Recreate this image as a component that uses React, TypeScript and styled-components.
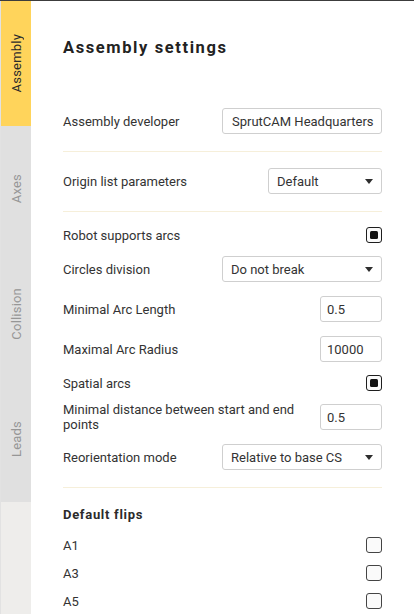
import styled, { createGlobalStyle } from 'styled-components';

const GlobalStyle = createGlobalStyle`
  html, body {
    margin: 0;
    padding: 0;
    background: #ffffff;
  }
  body {
    font-family: Roboto, "Liberation Sans", Arial, sans-serif;
    color: #333;
  }
  * {
    box-sizing: border-box;
  }
`;

const Frame = styled.div`
  display: flex;
  height: 614px;
  border-top: 1px solid #3c3c3c;
  overflow: hidden;
`;

const Sidebar = styled.nav`
  display: flex;
  flex-direction: column;
  flex: 0 0 31px;
  background: #eeedeb;
  border-left: 1px solid #e2e2e2;
`;

const Tab = styled.div<{ $active?: boolean }>`
  display: flex;
  align-items: center;
  justify-content: center;
  height: 125.25px;
  background: ${(p) => (p.$active ? '#ffd45b' : '#e0e0e0')};
  color: ${(p) => (p.$active ? '#2b2b2b' : '#969696')};
  font-size: 13px;
  letter-spacing: 0.2px;
`;

const TabLabel = styled.span`
  writing-mode: vertical-rl;
  transform: rotate(180deg);
`;

const Main = styled.main`
  flex: 1;
  background: #fff;
  padding: 37px 32px 0 32px;
`;

const Title = styled.h1`
  margin: 0 0 34px;
  font-size: 16.5px;
  line-height: 20px;
  font-weight: 700;
  letter-spacing: 1.6px;
  color: #222;
`;

const Section = styled.section<{ $last?: boolean }>`
  display: flex;
  flex-direction: column;
  gap: 14px;
  padding: ${(p) => (p.$last ? '19px 0 17px' : '16px 0 17px')};
  border-bottom: ${(p) => (p.$last ? 'none' : '1px solid #f6efda')};
`;

const Row = styled.div<{ $tight?: boolean }>`
  display: flex;
  align-items: center;
  justify-content: space-between;
  gap: 12px;
  ${(p) => (p.$tight ? 'height: 14px;' : 'min-height: 26px;')}
`;

const Label = styled.span<{ $wrap?: boolean }>`
  font-size: 13px;
  line-height: 15px;
  color: #333;
  ${(p) => (p.$wrap ? 'margin: -2px 0; max-width: 250px;' : 'white-space: nowrap;')}
`;

const Heading = styled.h2`
  margin: 0 0 2px;
  font-size: 13px;
  line-height: 15px;
  font-weight: 700;
  letter-spacing: 0.7px;
  color: #2b2b2b;
`;

const TextBox = styled.div<{ $width: number; $pad?: number }>`
  display: flex;
  align-items: center;
  flex: 0 0 auto;
  width: ${(p) => p.$width}px;
  height: 26px;
  padding: 0 ${(p) => p.$pad ?? 6}px;
  border: 1px solid #cfcfcf;
  border-radius: 3px;
  background: #fff;
  font-size: 13px;
  color: #333;
  white-space: nowrap;
  overflow: hidden;
`;

const SelectBox = styled(TextBox)`
  justify-content: space-between;
  padding: 0 8px 0 8px;
`;

const Caret = styled.span`
  width: 0;
  height: 0;
  border-left: 4.5px solid transparent;
  border-right: 4.5px solid transparent;
  border-top: 5px solid #2e2e2e;
`;

const Check = styled.span<{ $checked?: boolean }>`
  display: flex;
  align-items: center;
  justify-content: center;
  flex: 0 0 16px;
  width: 16px;
  height: 16px;
  margin: -1px 0;
  border: 1.5px solid ${(p) => (p.$checked ? '#1e1e1e' : '#444')};
  border-radius: 3px;
  background: #fafafa;

  &::after {
    content: '';
    display: ${(p) => (p.$checked ? 'block' : 'none')};
    width: 8px;
    height: 8px;
    border-radius: 1.5px;
    background: #111;
  }
`;

function Select({ value, width }: { value: string; width: number }) {
  return (
    <SelectBox $width={width}>
      <span>{value}</span>
      <Caret />
    </SelectBox>
  );
}

const tabs = ['Assembly', 'Axes', 'Collision', 'Leads'];

export default function App() {
  return (
    <>
      <GlobalStyle />
      <Frame>
        <Sidebar>
          {tabs.map((t, i) => (
            <Tab key={t} $active={i === 0}>
              <TabLabel>{t}</TabLabel>
            </Tab>
          ))}
        </Sidebar>
        <Main>
          <Title>Assembly settings</Title>

          <Section>
            <Row>
              <Label>Assembly developer</Label>
              <TextBox $width={160} $pad={9}>SprutCAM Headquarters</TextBox>
            </Row>
          </Section>

          <Section>
            <Row>
              <Label>Origin list parameters</Label>
              <Select value="Default" width={114} />
            </Row>
          </Section>

          <Section>
            <Row $tight>
              <Label>Robot supports arcs</Label>
              <Check $checked />
            </Row>
            <Row>
              <Label>Circles division</Label>
              <Select value="Do not break" width={160} />
            </Row>
            <Row>
              <Label>Minimal Arc Length</Label>
              <TextBox $width={62}>0.5</TextBox>
            </Row>
            <Row>
              <Label>Maximal Arc Radius</Label>
              <TextBox $width={62}>10000</TextBox>
            </Row>
            <Row $tight>
              <Label>Spatial arcs</Label>
              <Check $checked />
            </Row>
            <Row>
              <Label $wrap>Minimal distance between start and end points</Label>
              <TextBox $width={62}>0.5</TextBox>
            </Row>
            <Row>
              <Label>Reorientation mode</Label>
              <Select value="Relative to base CS" width={160} />
            </Row>
          </Section>

          <Section $last>
            <Heading>Default flips</Heading>
            {['A1', 'A3', 'A5'].map((a) => (
              <Row $tight key={a}>
                <Label>{a}</Label>
                <Check />
              </Row>
            ))}
          </Section>
        </Main>
      </Frame>
    </>
  );
}
